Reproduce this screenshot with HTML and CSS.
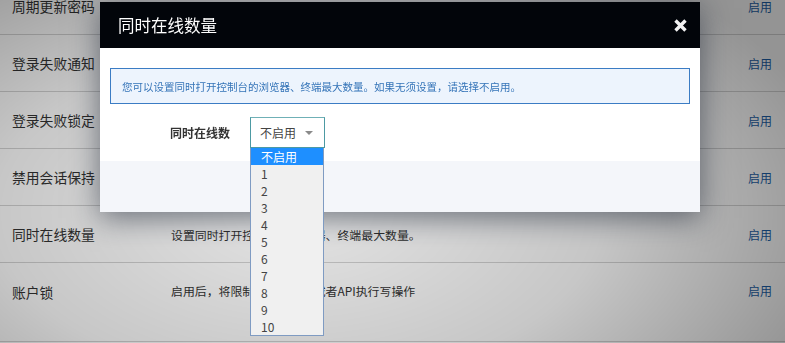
FILE: index.html
```html
<!DOCTYPE html>
<html lang="zh-CN">
<head>
<meta charset="utf-8">
<link rel="stylesheet" href="styles.css">
</head>
<body>
<div class="table">
  <div class="row"><div class="name">周期更新密码</div><div class="desc"></div><div class="act">启用</div></div>
  <div class="row"><div class="name">登录失败通知</div><div class="desc"></div><div class="act">启用</div></div>
  <div class="row"><div class="name">登录失败锁定</div><div class="desc"></div><div class="act">启用</div></div>
  <div class="row"><div class="name">禁用会话保持</div><div class="desc"></div><div class="act">启用</div></div>
  <div class="row"><div class="name">同时在线数量</div><div class="desc">设置同时打开控制台的浏览器、终端最大数量。</div><div class="act">启用</div></div>
  <div class="row last"><div class="name">账户锁</div><div class="desc">启用后，将限制控制台操作或者API执行写操作</div><div class="act">启用</div></div>
</div>
<div class="backdrop"></div>
<div class="modal">
  <div class="modal-header">
    <span class="modal-title">同时在线数量</span>
    <svg class="close" width="13" height="13" viewBox="0 0 13 13"><path d="M1.5 1.5 L11.5 11.5 M11.5 1.5 L1.5 11.5" stroke="#f2f2f2" stroke-width="3.4" fill="none"/></svg>
  </div>
  <div class="modal-body">
    <div class="alert">您可以设置同时打开控制台的浏览器、终端最大数量。如果无须设置，请选择不启用。</div>
    <div class="form-row">
      <label class="label">同时在线数</label>
      <div class="select-wrap">
        <div class="select"><span>不启用</span><span class="arrow"></span></div>
        <ul class="options">
          <li class="selected">不启用</li>
          <li>1</li><li>2</li><li>3</li><li>4</li><li>5</li><li>6</li><li>7</li><li>8</li><li>9</li><li>10</li>
        </ul>
      </div>
    </div>
  </div>
  <div class="modal-footer"></div>
</div>
</body>
</html>
```
FILE: styles.css
```css
html, body {
  margin: 0;
  padding: 0;
  background: #ffffff;
  overflow: hidden;
  height: 343px;
  font-family: "Noto Sans CJK SC", "Noto Sans", sans-serif;
}
.table {
  margin-top: -22px;
}
.row {
  display: grid;
  grid-template-columns: 171px 1fr 37px;
  align-items: center;
  height: 56px;
  border-bottom: 1px solid #d4d4d4;
}
.row.last {
  height: 78px;
  align-items: start;
  padding-top: 19px;
  box-sizing: border-box;
  height: 79px;
}
.name {
  padding-left: 12px;
  font-size: 13.8px;
  color: #333;
}
.desc {
  font-size: 11.9px;
  color: #333;
}
.act {
  font-size: 12px;
  color: #1d5fa8;
}
.backdrop {
  position: fixed;
  inset: 0;
  background: radial-gradient(ellipse 70% 90% at 38% 62%, rgba(0,0,0,0.10) 0%, rgba(0,0,0,0.22) 55%, rgba(0,0,0,0.42) 100%);
}
.modal {
  position: absolute;
  left: 100px;
  top: 2px;
  width: 600px;
  box-shadow: 0 6px 28px rgba(20,30,45,0.55);
  background: #fff;
}
.modal-header {
  height: 46px;
  background: #02050a;
  display: flex;
  align-items: center;
  justify-content: space-between;
  padding: 0 13px 0 18px;
}
.modal-title {
  color: #fff;
  font-size: 16.5px;
}
.close {
  display: block;
}
.modal-body {
  padding: 20px 10px 13px;
}
.alert {
  height: 34px;
  border: 1px solid #3b7cc4;
  background: #edf4fd;
  color: #3574b8;
  font-size: 10.5px;
  display: flex;
  align-items: center;
  padding-left: 11px;
}
.form-row {
  display: flex;
  align-items: center;
  margin-top: 13px;
  padding-left: 60px;
}
.label {
  width: 80px;
  font-size: 12px;
  font-weight: bold;
  color: #333;
}
.select-wrap {
  position: relative;
}
.select {
  border: 1px solid #4d9aa3;
  border-top-color: #6fb0b6;
  display: flex;
  align-items: center;
  justify-content: space-between;
  padding: 0 11px 0 9px;
  box-sizing: border-box;
  width: 75px;
  height: 31px;
  font-size: 12px;
  color: #444;
  background: #fff;
}
.arrow {
  width: 0;
  height: 0;
  border-left: 4px solid transparent;
  border-right: 4px solid transparent;
  border-top: 4px solid #8a8a8a;
}
.options {
  position: absolute;
  left: 0;
  top: 31px;
  margin: 0;
  padding: 0;
  list-style: none;
  width: 74px;
  box-sizing: border-box;
  border: 1px solid #7f9bc2;
  border-top: none;
  background: #f0f0f0;
  z-index: 5;
}
.options li {
  height: 17px;
  line-height: 17px;
  font-size: 12px;
  color: #444;
  padding-left: 10px;
}
.options li.selected {
  background: #1e8fff;
  color: #fff;
}
.modal-footer {
  height: 51px;
  background: #f4f6fa;
}
```
